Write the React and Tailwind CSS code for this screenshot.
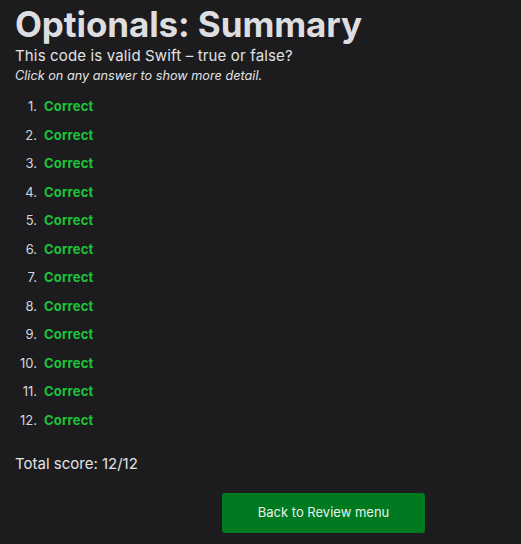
export default function App() {
  const items = Array.from({ length: 12 }, (_, i) => i + 1);
  return (
    <div
      className="min-h-[544px] w-[521px] bg-[#1c1c1e] px-[15px] text-[#e2e2e4] overflow-hidden"
      style={{ fontFamily: "Inter, 'Noto Sans', sans-serif" }}
    >
      <h1 className="pt-[1px] text-[35px] font-bold leading-[46px] tracking-[-0.1px] text-[#dedee0]">
        Optionals: Summary
      </h1>
      <p className="text-[15px] leading-[18px] tracking-[0.15px]">This code is valid Swift – true or false?</p>
      <p className="mt-[3px] text-[12.7px] italic leading-[16px]">Click on any answer to show more detail.</p>
      <ol className="mt-[8px]">
        {items.map((n) => (
          <li key={n} className="flex h-[28.5px] items-center text-[13px] leading-[28.5px]">
            <span className="w-[22px] text-right text-[#d6d6d8]">{n}.</span>
            <span className="ml-[7px] font-bold tracking-[0.2px] text-[#1ec23a]">Correct</span>
          </li>
        ))}
      </ol>
      <p className="mt-[21px] text-[15px] leading-[18px]">Total score: 12/12</p>
      <div className="mt-[20px] flex">
        <button className="ml-[207px] h-[40px] w-[203px] rounded-[3px] bg-[#007a21] text-[13px] text-[#e6f2e8]">
          Back to Review menu
        </button>
      </div>
    </div>
  );
}
